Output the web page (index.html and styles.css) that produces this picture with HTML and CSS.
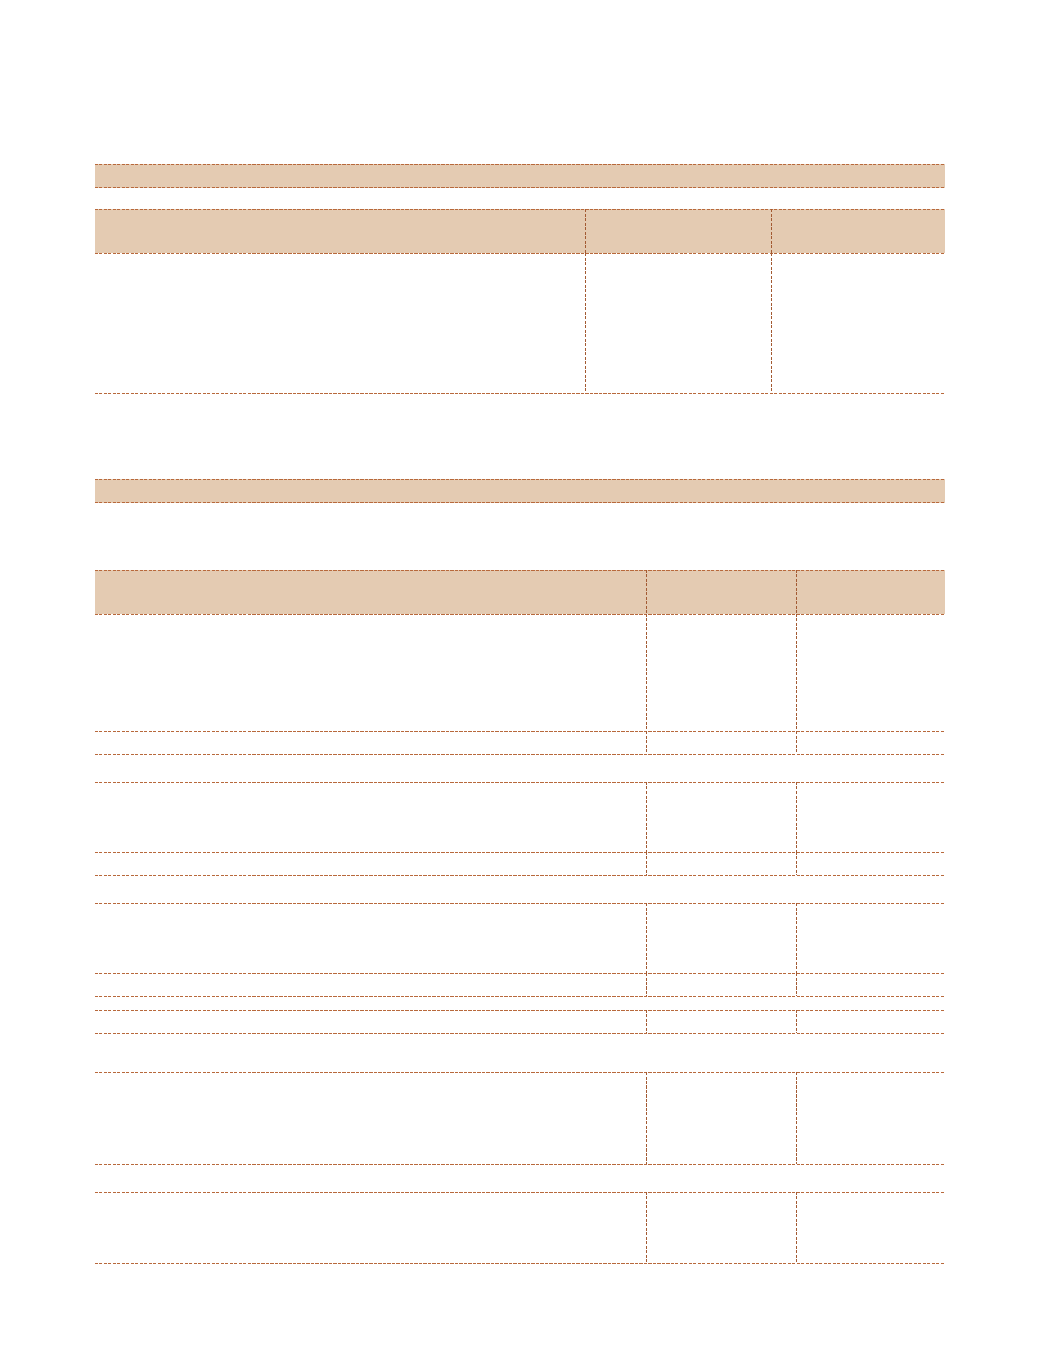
FILE: index.html
```html
<!DOCTYPE html>
<html lang="en">
<head>
<meta charset="utf-8">
<title>Tables</title>
<link rel="stylesheet" href="styles.css">
</head>
<body>
<main class="page">
  <div class="band"></div>

  <section class="table t1">
    <div class="row head h44"><div class="c"></div><div class="c"></div><div class="c"></div></div>
    <div class="row h140"><div class="c"></div><div class="c"></div><div class="c"></div></div>
    <div class="end"></div>
  </section>

  <div class="band band2"></div>

  <section class="table t2">
    <div class="row head h44"><div class="c"></div><div class="c"></div><div class="c"></div></div>
    <div class="row h117"><div class="c"></div><div class="c"></div><div class="c"></div></div>
    <div class="row h23"><div class="c"></div><div class="c"></div><div class="c"></div></div>
    <div class="row full h28"></div>
    <div class="row h70"><div class="c"></div><div class="c"></div><div class="c"></div></div>
    <div class="row h23"><div class="c"></div><div class="c"></div><div class="c"></div></div>
    <div class="row full h28"></div>
    <div class="row h70"><div class="c"></div><div class="c"></div><div class="c"></div></div>
    <div class="row h23"><div class="c"></div><div class="c"></div><div class="c"></div></div>
    <div class="row full h14"></div>
    <div class="row h23"><div class="c"></div><div class="c"></div><div class="c"></div></div>
    <div class="row full h39"></div>
    <div class="row h92"><div class="c"></div><div class="c"></div><div class="c"></div></div>
    <div class="row full h28"></div>
    <div class="row h71"><div class="c"></div><div class="c"></div><div class="c"></div></div>
    <div class="end"></div>
  </section>
</main>
</body>
</html>
```

FILE: styles.css
```css
* { box-sizing: border-box; }

html, body {
  margin: 0;
  padding: 0;
  background: #ffffff;
  font-family: "Liberation Sans", Arial, sans-serif;
}

.page {
  width: 850px;
  margin-left: 95px;
  padding-top: 164px;
  padding-bottom: 90px;
}

/* dashed line patterns */
.band,
.row,
.end {
  background-image:
    repeating-linear-gradient(to right, #b8693c 0 3px, rgba(255,255,255,0) 3px 4.5px);
  background-size: 100% 1px;
  background-position: left top;
  background-repeat: no-repeat;
}

.band {
  height: 24px;
  background-color: #e4cbb2;
  background-image:
    repeating-linear-gradient(to right, #b8693c 0 3px, rgba(255,255,255,0) 3px 4.5px),
    repeating-linear-gradient(to right, #b8693c 0 3px, rgba(255,255,255,0) 3px 4.5px);
  background-size: 100% 1px, 100% 1px;
  background-position: left top, left bottom;
  background-repeat: no-repeat, no-repeat;
}

.t1 { margin-top: 21px; }
.band2 { margin-top: 85px; }
.t2 { margin-top: 67px; }

.row {
  display: grid;
}

.t1 .row { grid-template-columns: 490px 186px 1fr; }
.t2 .row { grid-template-columns: 551px 150px 1fr; }

.row.full { display: block; }

.head { background-color: #e4cbb2; }

.c + .c {
  background-image:
    repeating-linear-gradient(to bottom, #a35a32 0 3px, rgba(255,255,255,0) 3px 4.5px);
  background-size: 1px 100%;
  background-position: left top;
  background-repeat: no-repeat;
}

.end { height: 1px; }

.h14 { height: 14px; }
.h23 { height: 23px; }
.h28 { height: 28px; }
.h39 { height: 39px; }
.h44 { height: 44px; }
.h70 { height: 70px; }
.h71 { height: 71px; }
.h92 { height: 92px; }
.h117 { height: 117px; }
.h140 { height: 140px; }
```
